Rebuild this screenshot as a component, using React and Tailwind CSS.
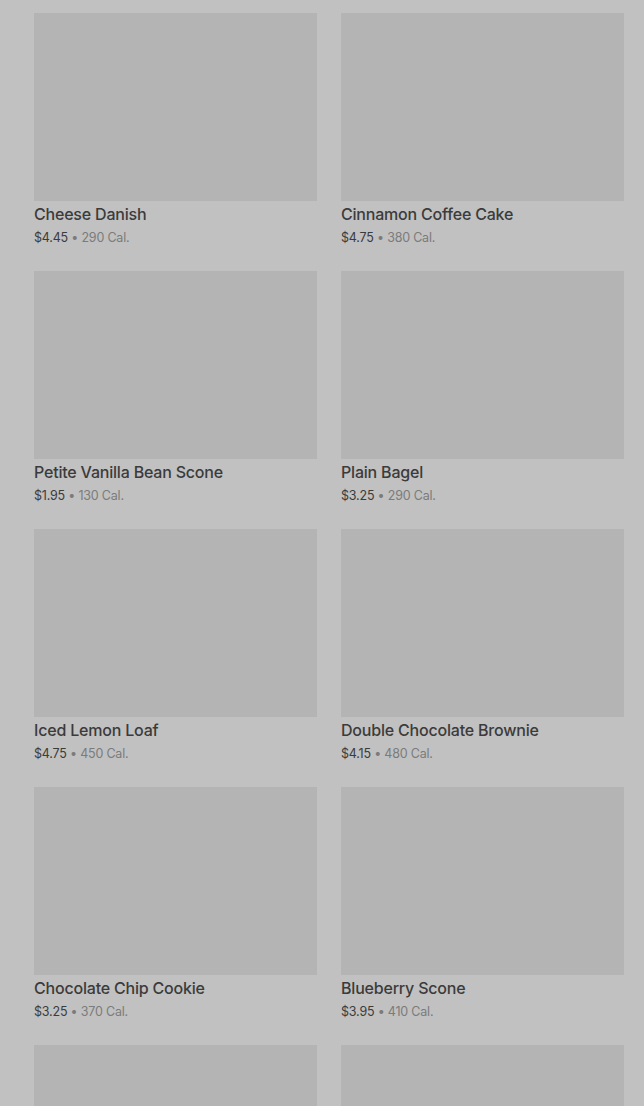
import React from 'react';

const items = [
  { name: 'Cheese Danish', price: '$4.45', cal: 290 },
  { name: 'Cinnamon Coffee Cake', price: '$4.75', cal: 380 },
  { name: 'Petite Vanilla Bean Scone', price: '$1.95', cal: 130 },
  { name: 'Plain Bagel', price: '$3.25', cal: 290 },
  { name: 'Iced Lemon Loaf', price: '$4.75', cal: 450 },
  { name: 'Double Chocolate Brownie', price: '$4.15', cal: 480 },
  { name: 'Chocolate Chip Cookie', price: '$3.25', cal: 370 },
  { name: 'Blueberry Scone', price: '$3.95', cal: 410 },
  { name: 'Butter Croissant', price: '$3.45', cal: 260 },
  { name: 'Banana Walnut Bread', price: '$3.95', cal: 420 },
];

const ProductCard = ({ item }) => (
  <div className="flex flex-col">
    <div className="h-[188px] bg-[#b4b4b4]" />
    <p className="mt-[3px] text-[16px] leading-5 font-medium text-[#3b3b3b] tracking-[-0.2px]">{item.name}</p>
    <p className="mt-[5px] text-[12.5px] leading-[18px] text-[#3b3b3b] tracking-[-0.2px]">
      {item.price}
      <span className="text-[#7b7b7b]"> • {item.cal} Cal.</span>
    </p>
  </div>
);

export default function App() {
  return (
    <div className="h-[1106px] overflow-hidden bg-[#c1c1c1] font-['Inter',sans-serif]">
      <div className="grid grid-cols-2 gap-x-[24px] gap-y-[24px] pl-[34px] pr-[20px] pt-[13px]">
        {items.map((item, idx) => (
          <ProductCard key={idx} item={item} />
        ))}
      </div>
    </div>
  );
}
